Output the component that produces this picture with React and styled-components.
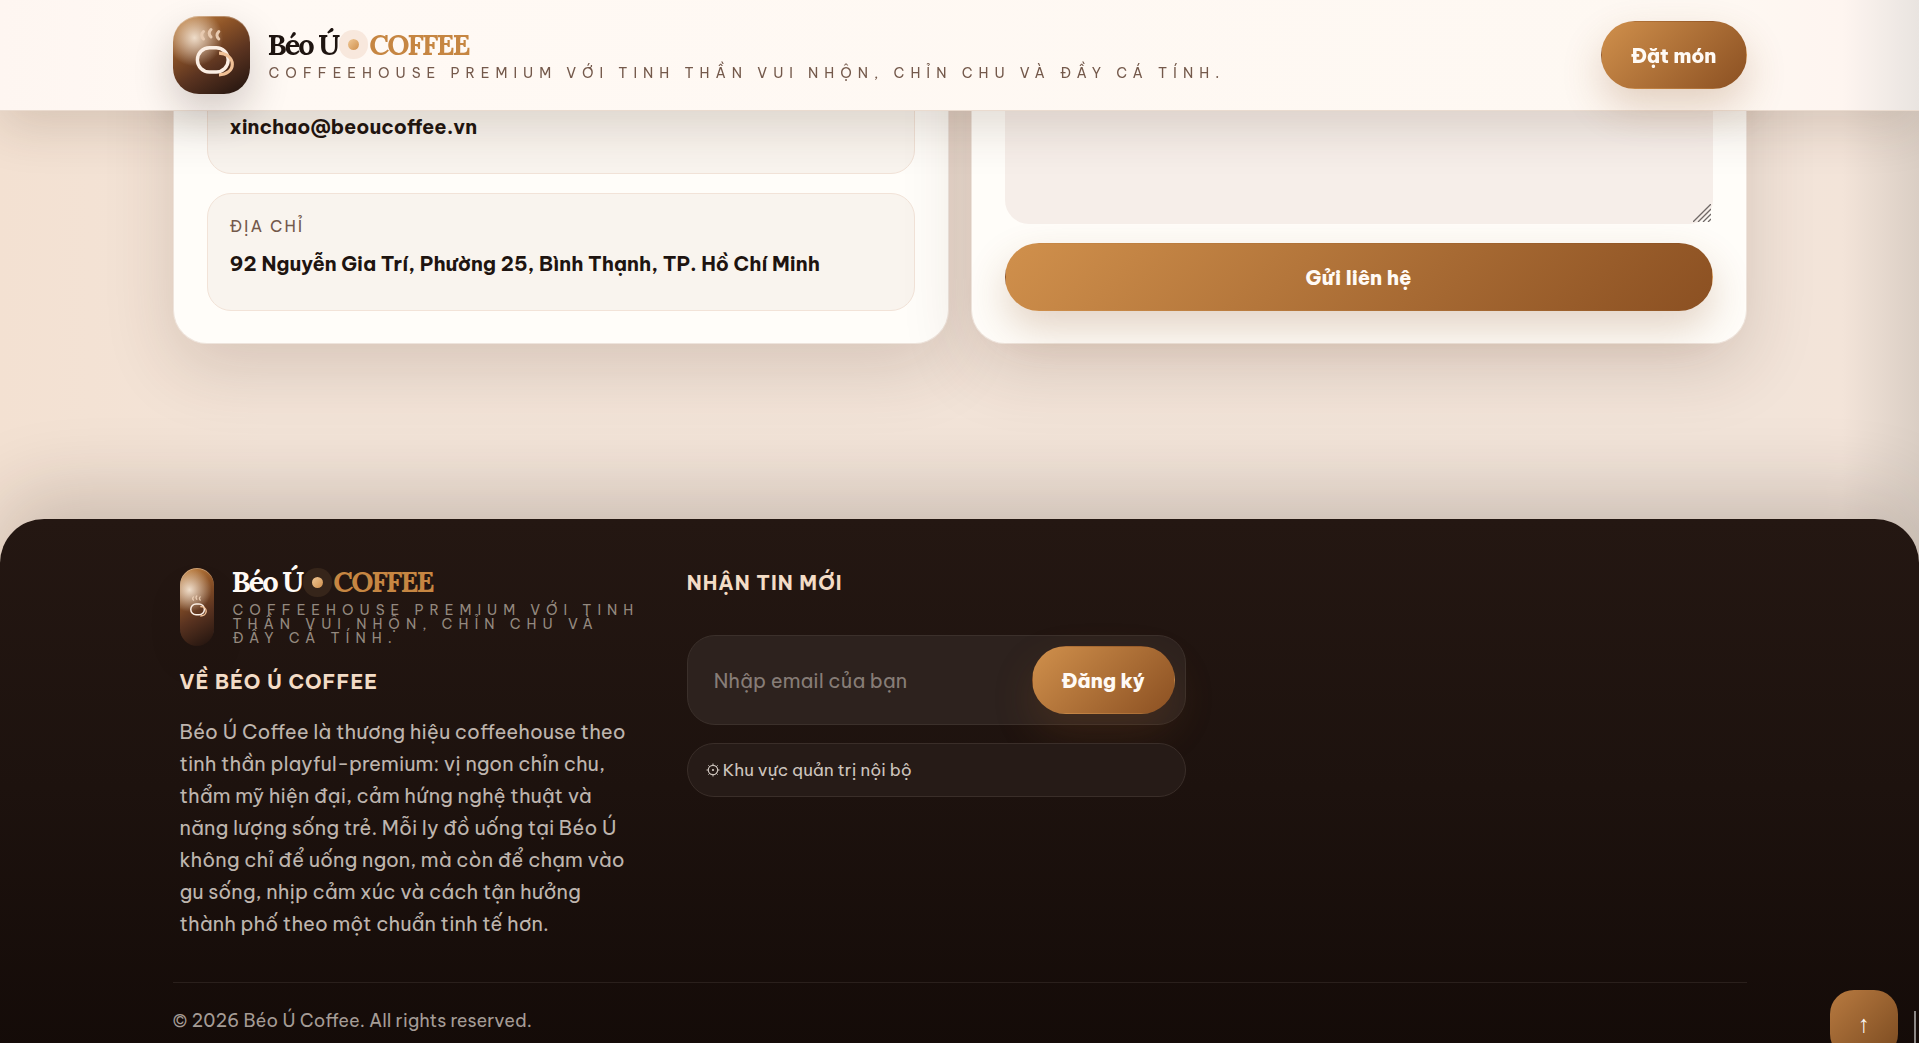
import React from "react";
import styled, { createGlobalStyle } from "styled-components";

const sans = `"Be Vietnam Pro", Inter, "Noto Sans", sans-serif`;
const serif = `Lora, "Liberation Serif", serif`;
const copper = `linear-gradient(135deg, #d0904c 0%, #8b5022 100%)`;

const CupMark = ({ narrow }) => (
  <Mark $narrow={narrow}>
    <svg viewBox="0 0 77 78" fill="none" aria-hidden="true">
      <g stroke="#e8cab0" strokeWidth="3" strokeLinecap="round">
        <path d="M30.500 15.500c-2.500 2.500-2.500 5 0 7.500" />
        <path d="M38 13.500c-2.500 2.500-2.500 5 0 7.500" />
        <path d="M45.800 15.500c-2.500 2.500-2.500 5 0 7.500" />
      </g>
      <rect x="24.400" y="31.700" width="30.800" height="24.300" rx="12" stroke="#fbeee4" strokeWidth="3.400" />
      <path d="M46 37.200c7.500 0 13.300 4.800 13.300 11s-5.800 10.600-13.300 10.600" stroke="#f0c096" strokeWidth="3.200" />
    </svg>
  </Mark>
);

const Brand = ({ dark }) => (
  <BrandLink href="#top" $dark={dark}>
    <CupMark narrow={dark} />
    <BrandText>
      <BrandName $dark={dark}>
        Béo Ú
        <Dot $dark={dark} />
        <em>COFFEE</em>
      </BrandName>
      <Tagline $dark={dark}>
        Coffeehouse premium với tinh thần vui nhộn, chỉn chu và đầy cá tính.
      </Tagline>
    </BrandText>
  </BrandLink>
);

const GearIcon = () => (
  <svg width="14" height="14" viewBox="0 0 14 14" fill="none" stroke="currentColor" aria-hidden="true">
    <circle cx="7" cy="7" r="4.700" strokeWidth="1.200" />
    <circle cx="7" cy="7" r="0.700" fill="currentColor" />
    <path d="M7 .5v2M7 11.500v2M.5 7h2M11.500 7h2M2.400 2.400l1.400 1.400M10.200 10.200l1.400 1.400M2.400 11.600l1.400-1.400M10.200 3.800l1.400-1.400" />
  </svg>
);

const App = () => {
  const stop = (e) => e.preventDefault();

  return (
    <Page id="top">
      <GlobalStyle />
      <Header>
        <Container>
          <HeaderRow>
            <Brand />
            <Button type="button">Đặt món</Button>
          </HeaderRow>
        </Container>
      </Header>

      <Contact>
        <Container>
          <Panels>
            <Panel>
              <InfoItem>
                <strong>xinchao@beoucoffee.vn</strong>
              </InfoItem>
              <InfoItem>
                <span>Địa chỉ</span>
                <strong>92 Nguyễn Gia Trí, Phường 25, Bình Thạnh, TP. Hồ Chí Minh</strong>
              </InfoItem>
            </Panel>
            <Panel as="form" onSubmit={stop}>
              <MessageBox>
                <Message aria-label="Lời nhắn" />
                <Grip viewBox="0 0 18 18" aria-hidden="true">
                  <path d="M0 18L18 0M5 18L18 5M10 18l8-8M15 18l3-3" />
                </Grip>
              </MessageBox>
              <Button type="submit">Gửi liên hệ</Button>
            </Panel>
          </Panels>
        </Container>
      </Contact>

      <Footer>
        <Container>
          <FooterGrid>
            <div>
              <Brand dark />
              <FooterTitle>Về Béo Ú Coffee</FooterTitle>
              <About>
                Béo Ú Coffee là thương hiệu coffeehouse theo tinh thần
                playful-premium: vị ngon chỉn chu, thẩm mỹ hiện đại, cảm hứng
                nghệ thuật và năng lượng sống trẻ. Mỗi ly đồ uống tại Béo Ú
                không chỉ để uống ngon, mà còn để chạm vào gu sống, nhịp cảm xúc
                và cách tận hưởng thành phố theo một chuẩn tinh tế hơn.
              </About>
            </div>
            <Signup>
              <FooterTitle>Nhận tin mới</FooterTitle>
              <Newsletter onSubmit={stop}>
                <input type="email" aria-label="Email" placeholder="Nhập email của bạn" />
                <Button type="submit">Đăng ký</Button>
              </Newsletter>
              <AdminLink href="#admin">
                <GearIcon />
                Khu vực quản trị nội bộ
              </AdminLink>
            </Signup>
          </FooterGrid>
          <Copyright>© 2026 Béo Ú Coffee. All rights reserved.</Copyright>
        </Container>
      </Footer>

      <ToTop type="button" aria-label="Lên đầu trang">↑</ToTop>
      <ScrollLine />
    </Page>
  );
};

const GlobalStyle = createGlobalStyle`
  * {
    box-sizing: border-box;
  }
  body {
    margin: 0;
    font-family: ${sans};
    color: #1e1410;
    background: #f3e4d8;
  }
  button, input, textarea {
    font: inherit;
  }
  a {
    color: inherit;
    text-decoration: none;
  }
`;

const Page = styled.div`
  display: flex;
  flex-direction: column;
  height: 100vh;
  overflow: hidden;
  position: relative;
  background: linear-gradient(90deg, #f3e1d2 0%, #f3e4d8 14%, #f2e4d9 92%, #f3e4d9 96%, #dacec4 100%);
`;

const Container = styled.div`
  width: calc(100% - 345px);
  margin: 0 auto;
`;

const Header = styled.header`
  position: fixed;
  top: 0;
  left: 0;
  right: 0;
  z-index: 5;
  background: linear-gradient(90deg, #fef6f1 0%, #fff9f4 12%, #fef8f2 90%, #fef5f0 96%, #e9e4e0 100%);
  border-bottom: 1px solid #eadbcf;
  box-shadow: 0 16px 50px rgba(60, 35, 20, 0.16);
`;

const HeaderRow = styled.div`
  display: flex;
  align-items: center;
  justify-content: space-between;
  height: 110px;
`;

const Button = styled.button`
  height: 68px;
  padding: 0 29px;
  border: 1px solid transparent;
  border-radius: 34px;
  background: ${copper};
  color: #fffaf5;
  font-size: 20px;
  font-weight: 800;
  white-space: nowrap;
  cursor: pointer;
  box-shadow: 0 18px 40px rgba(139, 80, 34, 0.24);
`;

const BrandLink = styled.a`
  display: flex;
  align-items: ${({ $dark }) => ($dark ? "flex-start" : "center")};
  gap: 18px;
`;

const Mark = styled.span`
  display: flex;
  align-items: center;
  justify-content: center;
  flex: none;
  width: ${({ $narrow }) => ($narrow ? "34px" : "77px")};
  height: 78px;
  border-radius: 26px;
  background: radial-gradient(circle at 28% 28%, rgba(255, 244, 230, 0.85) 0%, rgba(255, 244, 230, 0) 36%),
    linear-gradient(150deg, #c68642 0%, #8f5528 30%, #5a3320 60%, #1e120e 100%);
  box-shadow: 0 18px 40px rgba(36, 20, 14, ${({ $narrow }) => ($narrow ? "0.06" : "0.2")}),
    inset 0 1px 0 rgba(255, 255, 255, 0.3);
  svg {
    width: 100%;
  }
`;

const BrandText = styled.span`
  display: flex;
  flex-direction: column;
  gap: 7px;
`;

const BrandName = styled.span`
  display: flex;
  align-items: center;
  font-family: ${serif};
  font-size: 29px;
  line-height: 28px;
  font-weight: 700;
  letter-spacing: -2px;
  color: ${({ $dark }) => ($dark ? "#fffaf5" : "#1e1410")};
  em {
    font-style: normal;
    color: #c68642;
  }
`;

const Dot = styled.i`
  width: 11px;
  height: 11px;
  margin: 0 10px;
  border-radius: 50%;
  background: linear-gradient(135deg, #f0c896, #cf8f4c);
  box-shadow: 0 0 0 9px ${({ $dark }) => ($dark ? "#36251a" : "#f8e8dd")};
`;

const Tagline = styled.small`
  padding-left: 1px;
  font-size: 14px;
  line-height: 14px;
  letter-spacing: 6px;
  text-transform: uppercase;
  color: ${({ $dark }) => ($dark ? "#94897f" : "#74594b")};
`;

const Contact = styled.main`
  padding-bottom: 175px;
`;

const Panels = styled.div`
  display: grid;
  grid-template-columns: 1fr 1fr;
  gap: 22px;
`;

const Panel = styled.div`
  display: flex;
  flex-direction: column;
  gap: 19px;
  padding: 56px 33px 32px;
  border: 1px solid #eee4dc;
  border-top: 0;
  border-radius: 0 0 34px 34px;
  background: #fffdf9;
  box-shadow: 0 24px 70px rgba(70, 40, 22, 0.16);
`;

const InfoItem = styled.div`
  display: flex;
  flex-direction: column;
  justify-content: flex-end;
  gap: 12px;
  height: 118px;
  padding: 0 22px 32px;
  border: 1px solid #f2e3d8;
  border-radius: 24px;
  background: #f9f4ee;
  span {
    font-size: 16px;
    line-height: 24px;
    letter-spacing: 2px;
    text-transform: uppercase;
    color: #74594b;
  }
  strong {
    font-size: 20px;
    line-height: 28px;
    font-weight: 700;
  }
`;

const MessageBox = styled.div`
  display: flex;
  flex: 1;
  position: relative;
`;

const Message = styled.textarea`
  flex: 1;
  border: 0;
  border-radius: 24px;
  background: #f6eee9;
  resize: none;
`;

const Grip = styled.svg`
  position: absolute;
  right: 2px;
  bottom: 2px;
  width: 18px;
  height: 18px;
  fill: none;
  stroke: #6f6866;
  stroke-width: 1.3;
  pointer-events: none;
`;

const Footer = styled.footer`
  flex: 1 0 auto;
  padding: 49px 0 20px;
  border-radius: 44px 44px 0 0;
  background: linear-gradient(180deg, #241712 0%, #1d120e 50%, #140b08 100%);
  box-shadow: 0 -24px 80px rgba(36, 23, 18, 0.2);
`;

const FooterGrid = styled.div`
  display: grid;
  grid-template-columns: 29.5% 32% 1fr;
  gap: 47px;
  padding: 0 7px 42px;
`;

const FooterTitle = styled.h3`
  margin: 22px 0 20px;
  font-size: 20px;
  line-height: 28px;
  font-weight: 700;
  letter-spacing: 1px;
  text-transform: uppercase;
  color: #f3dcc6;
`;

const About = styled.p`
  margin: 0;
  font-size: 20px;
  line-height: 32px;
  color: #beb5ae;
`;

const Signup = styled.div`
  display: flex;
  flex-direction: column;
  gap: 18px;
  ${FooterTitle} {
    margin-top: 1px;
  }
`;

const Newsletter = styled.form`
  display: flex;
  padding: 10px;
  border: 1px solid #3b302b;
  border-radius: 28px;
  background: #2d221e;
  input {
    flex: 1;
    min-width: 0;
    padding: 0 16px;
    border: 0;
    background: transparent;
    color: #fffaf5;
    font-size: 20px;
  }
  input::placeholder {
    color: #877d77;
  }
`;

const AdminLink = styled.a`
  display: flex;
  align-items: center;
  gap: 3px;
  height: 54px;
  padding: 0 18px;
  border: 1px solid #3a2e29;
  border-radius: 27px;
  background: #261b17;
  color: #cdc4bd;
  font-size: 17px;
`;

const Copyright = styled.p`
  margin: 0;
  padding-top: 24px;
  border-top: 1px solid #2a201c;
  font-size: 18px;
  line-height: 28px;
  color: #a59c96;
`;

const ToTop = styled.button`
  position: fixed;
  right: 21px;
  bottom: -15px;
  width: 68px;
  height: 68px;
  border: 0;
  border-radius: 24px;
  background: linear-gradient(135deg, #b87a40, #7a4a20);
  color: #fffaf5;
  font-family: "Liberation Sans", Arial, sans-serif;
  font-size: 24px;
  cursor: pointer;
`;

const ScrollLine = styled.span`
  position: fixed;
  right: 3px;
  bottom: 0;
  width: 2px;
  height: 32px;
  background: #8d8987;
`;

export default App;
